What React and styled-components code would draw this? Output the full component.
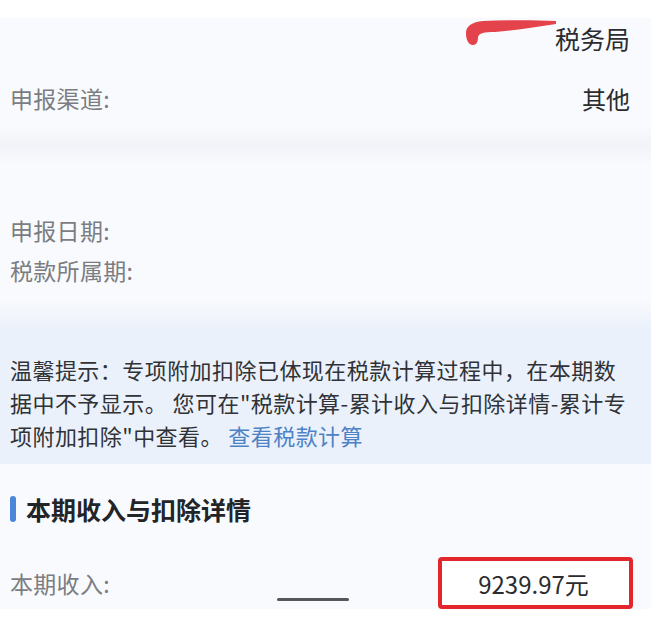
import React from 'react';
import styled, { createGlobalStyle } from 'styled-components';

const Global = createGlobalStyle`
  html, body {
    margin: 0;
    padding: 0;
    background: #ffffff;
  }
  body {
    font-family: "Noto Sans CJK SC", "Noto Sans", sans-serif;
  }
`;

const Page = styled.div`
  width: 651px;
  height: 622px;
  overflow: hidden;
  background: #ffffff;
  padding-top: 18px;
  box-sizing: border-box;
`;

const Card = styled.div`
  background: #f8fafd;
  display: flex;
  flex-direction: column;
  gap: ${(p) => p.gap || '0px'};
  padding: ${(p) => p.pd || '0'};
`;

const Band = styled.div`
  height: ${(p) => p.h};
  background: linear-gradient(
    to bottom,
    ${(p) => p.from} 0%,
    ${(p) => p.mid} 50%,
    ${(p) => p.to} 100%
  );
`;

const Row = styled.div`
  height: ${(p) => p.h || '40px'};
  display: flex;
  align-items: center;
  padding: 0 21px 0 10px;
`;

const Label = styled.span`
  font-size: 23px;
  color: #7b7d82;
  letter-spacing: 0.3px;
`;

const Value = styled.span`
  margin-left: auto;
  font-size: ${(p) => p.size || '24px'};
  color: #2b2c30;
`;

const Office = styled.div`
  margin-left: auto;
  display: flex;
  align-items: center;
  font-size: 25px;
  color: #2b2c30;
`;

const Mark = styled.svg`
  flex-shrink: 0;
  width: 92px;
  height: 26px;
  margin-right: -2px;
  margin-top: -10px;
`;

const Notice = styled.div`
  background: #eaf1fb;
  padding: 23px 14px 12px 10px;
  font-size: 22px;
  line-height: 33px;
  color: #303236;
  letter-spacing: 0.45px;
`;

const Link = styled.span`
  color: #4d82c6;
`;

const Header = styled.div`
  background: #f8fafd;
  padding: 30px 10px 33px;
  display: flex;
  align-items: center;
  gap: 10px;
`;

const Bar = styled.span`
  width: 6px;
  height: 26px;
  border-radius: 3px;
  background: #4a86da;
`;

const Title = styled.h2`
  margin: 0;
  font-size: 25px;
  line-height: 30px;
  font-weight: 700;
  color: #232428;
`;

const IncomeRow = styled.div`
  height: 52px;
  display: flex;
  align-items: center;
  padding: 0 18px 0 10px;
  background: #f8fafd;
`;

const Dash = styled.span`
  margin-left: auto;
  margin-right: 89px;
  align-self: flex-end;
  margin-bottom: 8px;
  width: 72px;
  height: 3px;
  border-radius: 2px;
  background: #55575c;
`;

const ValueBox = styled.div`
  width: 195px;
  height: 52px;
  box-sizing: border-box;
  border: 4px solid #e3262c;
  border-radius: 4px;
  background: #ffffff;
  display: flex;
  align-items: center;
  justify-content: center;
  font-size: 24px;
  color: #2b2c30;
  padding-right: 4px;
`;

export default function App() {
  return (
    <Page>
      <Global />
      <Card pd="0 0 10px" gap="20px">
        <Row h="40px">
          <Office>
            <Mark viewBox="0 0 92 26">
              <path
                d="M91 1 C70 0 42 0 18 1 C7 2 1 6 1 13 C1 19 3 25 8 25 C12 25 13 21 13 17 C14 13 19 12 30 12 C52 10 72 7 91 4 Z"
                fill="#e4434c"
              />
            </Mark>
            税务局
          </Office>
        </Row>
        <Row h="40px">
          <Label>申报渠道:</Label>
          <Value>其他</Value>
        </Row>
      </Card>
      <Band h="34px" from="#f7f9fc" mid="#f1f3f8" to="#f7f9fc" />
      <Card pd="48px 0 10px">
        <Row h="40px">
          <Label>申报日期:</Label>
        </Row>
        <Row h="40px">
          <Label>税款所属期:</Label>
        </Row>
      </Card>
      <Band h="30px" from="#f8fafd" mid="#f2f5fb" to="#eaf1fb" />
      <Notice>
        温馨提示：专项附加扣除已体现在税款计算过程中，在本期数据中不予显示。 您可在"税款计算-累计收入与扣除详情-累计专项附加扣除"中查看。 <Link>查看税款计算</Link>
      </Notice>
      <Header>
        <Bar />
        <Title>本期收入与扣除详情</Title>
      </Header>
      <IncomeRow>
        <Label>本期收入:</Label>
        <Dash />
        <ValueBox>9239.97元</ValueBox>
      </IncomeRow>
    </Page>
  );
}
